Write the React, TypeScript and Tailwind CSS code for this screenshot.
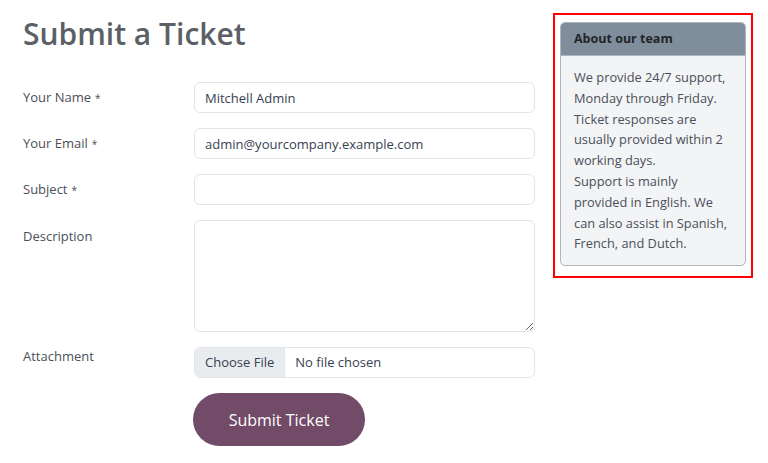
const font = { fontFamily: '"Open Sans", "Noto Sans", sans-serif' };

const Label = ({ text, required, className }: { text: string; required?: boolean; className?: string }) => (
  <div className={`w-[171px] shrink-0 text-[13px] text-[#4a4f59] ${className ?? ""}`}>
    {text}
    {required && <span className="ml-1 text-[10px]">*</span>}
  </div>
);

const inputClass =
  "w-[341px] h-[31px] rounded-[6px] border border-[#e2e4e8] bg-white px-[10px] text-[13px] text-[#374151] outline-none";

export default function App() {
  return (
    <div className="flex min-h-screen bg-white pl-[23px]" style={font}>
      <div className="w-[530px] shrink-0">
        <h1 className="mt-[15px] mb-[29px] text-[30px] font-semibold leading-[38px] text-[#5b5f66]">Submit a Ticket</h1>

        <div className="flex flex-col gap-[15px]">
          <div className="flex items-center">
            <Label text="Your Name" required />
            <input className={inputClass} defaultValue="Mitchell Admin" />
          </div>
          <div className="flex items-center">
            <Label text="Your Email" required />
            <input className={inputClass} defaultValue="admin@yourcompany.example.com" />
          </div>
          <div className="flex items-center">
            <Label text="Subject" required />
            <input className={inputClass} />
          </div>
          <div className="flex items-start">
            <Label text="Description" className="pt-[7px]" />
            <textarea className="w-[341px] h-[112px] rounded-[6px] border border-[#e2e4e8] bg-white px-[10px] py-[6px] text-[13px] outline-none" />
          </div>
          <div className="flex items-start">
            <Label text="Attachment" />
            <div className="flex w-[341px] h-[31px] overflow-hidden rounded-[6px] border border-[#e2e4e8] text-[13px] text-[#374151]">
              <div className="flex items-center border-r border-[#e2e4e8] bg-[#e9ecef] px-[10px]">Choose File</div>
              <div className="flex items-center px-[10px]">No file chosen</div>
            </div>
          </div>
          <div className="flex">
            <div className="w-[170px] shrink-0" />
            <button className="h-[53px] w-[172px] rounded-full bg-[#714b67] text-[16px] text-white">Submit Ticket</button>
          </div>
        </div>
      </div>

      <div className="mt-[13px] self-start border-2 border-[#ff0000] px-[5px] pt-[7px] pb-[10px]">
        <div className="w-[186px] overflow-hidden rounded-[5px] border border-[#aeb5bd] bg-[#f3f4f6]">
          <div className="h-[32px] bg-[#808e9b] px-[13px] text-[12.5px] font-bold leading-[32px] text-[#212529]">About our team</div>
          <div className="border-t border-[#aeb5bd] px-[13px] pt-[11px] pb-[11px] text-[12.8px] leading-[20.8px] text-[#4a4f59]">
            We provide 24/7 support, Monday through Friday. Ticket responses are usually provided within 2 working days.
            <br />
            Support is mainly provided in English. We can also assist in Spanish, French, and Dutch.
          </div>
        </div>
      </div>
    </div>
  );
}
